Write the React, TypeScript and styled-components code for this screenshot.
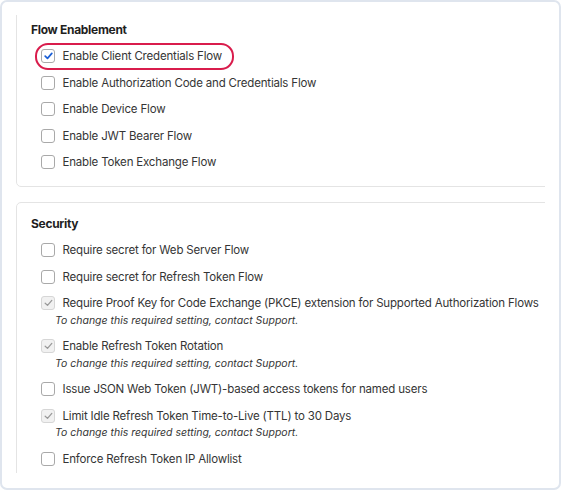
import React from "react"
import styled, { createGlobalStyle, css } from "styled-components"

type CheckState = "off" | "on" | "locked"

interface Option {
  label: string
  state: CheckState
  note?: string
  highlight?: boolean
}

const flowOptions: Option[] = [
  { label: "Enable Client Credentials Flow", state: "on", highlight: true },
  { label: "Enable Authorization Code and Credentials Flow", state: "off" },
  { label: "Enable Device Flow", state: "off" },
  { label: "Enable JWT Bearer Flow", state: "off" },
  { label: "Enable Token Exchange Flow", state: "off" }
]

const NOTE = "To change this required setting, contact Support."

const securityOptions: Option[] = [
  { label: "Require secret for Web Server Flow", state: "off" },
  { label: "Require secret for Refresh Token Flow", state: "off" },
  {
    label:
      "Require Proof Key for Code Exchange (PKCE) extension for Supported Authorization Flows",
    state: "locked",
    note: NOTE
  },
  { label: "Enable Refresh Token Rotation", state: "locked", note: NOTE },
  {
    label: "Issue JSON Web Token (JWT)-based access tokens for named users",
    state: "off"
  },
  {
    label: "Limit Idle Refresh Token Time-to-Live (TTL) to 30 Days",
    state: "locked",
    note: NOTE
  },
  { label: "Enforce Refresh Token IP Allowlist", state: "off" }
]

const Check: React.FC<{ state: CheckState }> = ({ state }) => (
  <Box state={state}>
    {state !== "off" && (
      <svg width="9" height="8" viewBox="0 0 9 8">
        <path
          d="M1.2 4.2 L3.5 6.4 L7.8 1.4"
          fill="none"
          stroke={state === "on" ? "#1b5fd6" : "#9a9a9a"}
          strokeWidth={state === "on" ? 1.7 : 1.3}
          strokeLinecap="round"
          strokeLinejoin="round"
        />
      </svg>
    )}
  </Box>
)

const Section: React.FC<{ title: string; options: Option[] }> = ({
  title,
  options
}) => (
  <Card>
    <CardTitle>{title}</CardTitle>
    <OptionList>
      {options.map((o) => (
        <OptionItem key={o.label}>
          <Row highlight={o.highlight}>
            <Check state={o.state} />
            <Label>{o.label}</Label>
          </Row>
          {o.note && <Note>{o.note}</Note>}
        </OptionItem>
      ))}
    </OptionList>
  </Card>
)

export default function App() {
  return (
    <>
      <GlobalStyle />
      <Frame>
        <Viewport>
          <Stack>
            <Section title="Flow Enablement" options={flowOptions} />
            <Section title="Security" options={securityOptions} />
          </Stack>
        </Viewport>
      </Frame>
    </>
  )
}

const GlobalStyle = createGlobalStyle`
  * { box-sizing: border-box; }
  html, body { margin: 0; padding: 0; background: #ffffff; }
  body {
    font-family: Inter, "Liberation Sans", Arial, sans-serif;
    color: #353535;
    -webkit-font-smoothing: antialiased;
  }
`

const Frame = styled.div`
  width: 561px;
  height: 490px;
  display: flex;
  flex-direction: column;
  padding: 13px 14px 15px 14px;
  border: 2px solid #dfe5ee;
  border-radius: 7px;
  background: #ffffff;
`

const Viewport = styled.div`
  flex: 1;
  overflow: hidden;
`

const Stack = styled.div`
  display: flex;
  flex-direction: column;
  gap: 15px;
  margin-top: -7px;
  margin-right: -14px;
`

const Card = styled.section`
  border: 1px solid #e4e4e4;
  border-radius: 5px;
  padding: 12px 14px 15px 14px;
`

const CardTitle = styled.h3`
  margin: 0 0 8px 0;
  font-size: 12px;
  line-height: 18px;
  font-weight: 700;
  letter-spacing: -0.3px;
  color: #1f1f1f;
`

const OptionList = styled.div`
  display: flex;
  flex-direction: column;
  gap: 8.5px;
  padding-left: 10px;
`

const OptionItem = styled.div`
  display: flex;
  flex-direction: column;
`

const Row = styled.div<{ highlight?: boolean }>`
  position: relative;
  display: inline-flex;
  align-self: flex-start;
  align-items: center;
  gap: 7.5px;
  height: 18px;
  ${(p) =>
    p.highlight &&
    css`
      &::before {
        content: "";
        position: absolute;
        inset: -4.5px -12px -4.5px -6.5px;
        border: 2.5px solid #d91c4c;
        border-radius: 13px;
        pointer-events: none;
      }
    `}
`

const Box = styled.span<{ state: CheckState }>`
  width: 14px;
  height: 14px;
  flex: none;
  display: flex;
  align-items: center;
  justify-content: center;
  border-radius: 3px;
  border: 1px solid ${(p) => (p.state === "locked" ? "#d6d6d6" : "#a9a9a9")};
  background: ${(p) => (p.state === "locked" ? "#f1f1f1" : "#ffffff")};
`

const Label = styled.span`
  font-size: 11.5px;
  line-height: 18px;
  letter-spacing: -0.18px;
  white-space: nowrap;
  color: #353535;
`

const Note = styled.div`
  margin: 0.5px 0 0 14px;
  font-size: 10.5px;
  line-height: 16px;
  font-style: italic;
  color: #353535;
  white-space: nowrap;
`
